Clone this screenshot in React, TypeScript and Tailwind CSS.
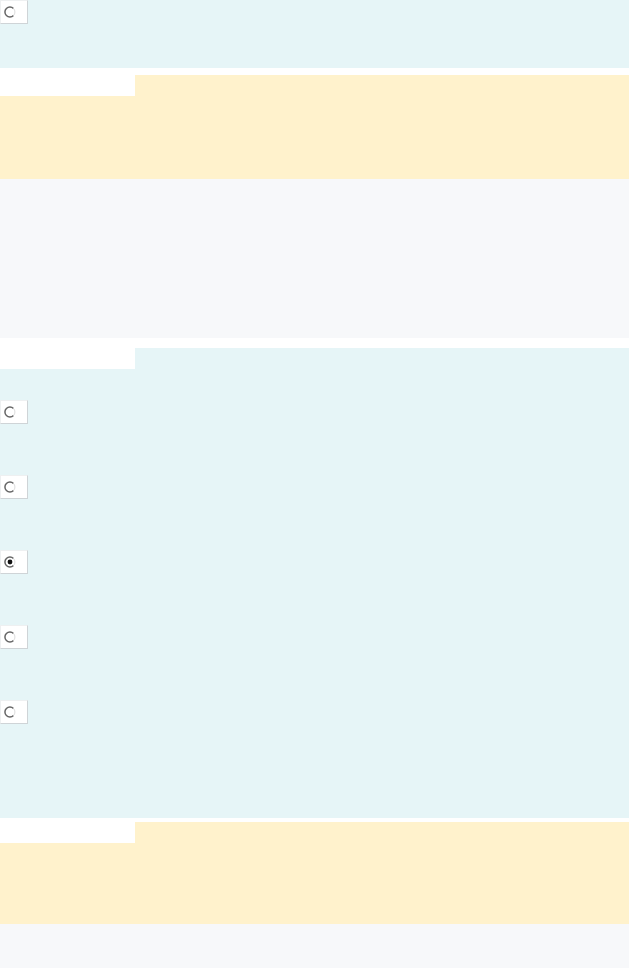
import React from "react"

function Radio({ checked = false }: { checked?: boolean }) {
  return (
    <div className="w-[28px] h-[24px] bg-white border border-[#eef0f1] border-r-[#cfd4d7] border-b-[#cfd4d7] flex items-center pl-[3px]">
      <svg width="12" height="12" viewBox="0 0 12 12">
        <circle cx="6" cy="6" r="5" fill="#fff" />
        <path d="M9.5 2.5 A5 5 0 1 0 9.5 9.5" fill="none" stroke="#666" strokeWidth="1.5" />
        <path d="M9.5 9.5 A5 5 0 0 0 9.5 2.5" fill="none" stroke="#dcdcdc" strokeWidth="1" />
        {checked && <circle cx="6" cy="6" r="2.4" fill="#111" />}
      </svg>
    </div>
  )
}

function Tab() {
  return <div className="w-[135px] h-[21px] bg-white" />
}

export default function App() {
  const options = [false, false, true, false, false]

  return (
    <div className="w-[629px] min-h-[968px] bg-white font-['Liberation_Sans',sans-serif]">
      {/* top block */}
      <div className="h-[68px] bg-[#e6f5f7]">
        <Radio />
      </div>

      <div className="h-[7px] bg-white" />

      {/* yellow block */}
      <div className="h-[104px] bg-[#fff2cc]">
        <Tab />
      </div>

      {/* gray block */}
      <div className="h-[159px] bg-[#f7f8fa]" />

      <div className="h-[10px] bg-white" />

      {/* options block */}
      <div className="h-[470px] bg-[#e6f5f7] flex flex-col">
        <Tab />
        <div className="flex flex-col gap-[51px] pt-[31px]">
          {options.map((c, i) => (
            <Radio key={i} checked={c} />
          ))}
        </div>
      </div>

      <div className="h-[4px] bg-white" />

      <div className="h-[102px] bg-[#fff2cc]">
        <Tab />
      </div>

      <div className="h-[44px] bg-[#f7f8fa]" />
    </div>
  )
}
